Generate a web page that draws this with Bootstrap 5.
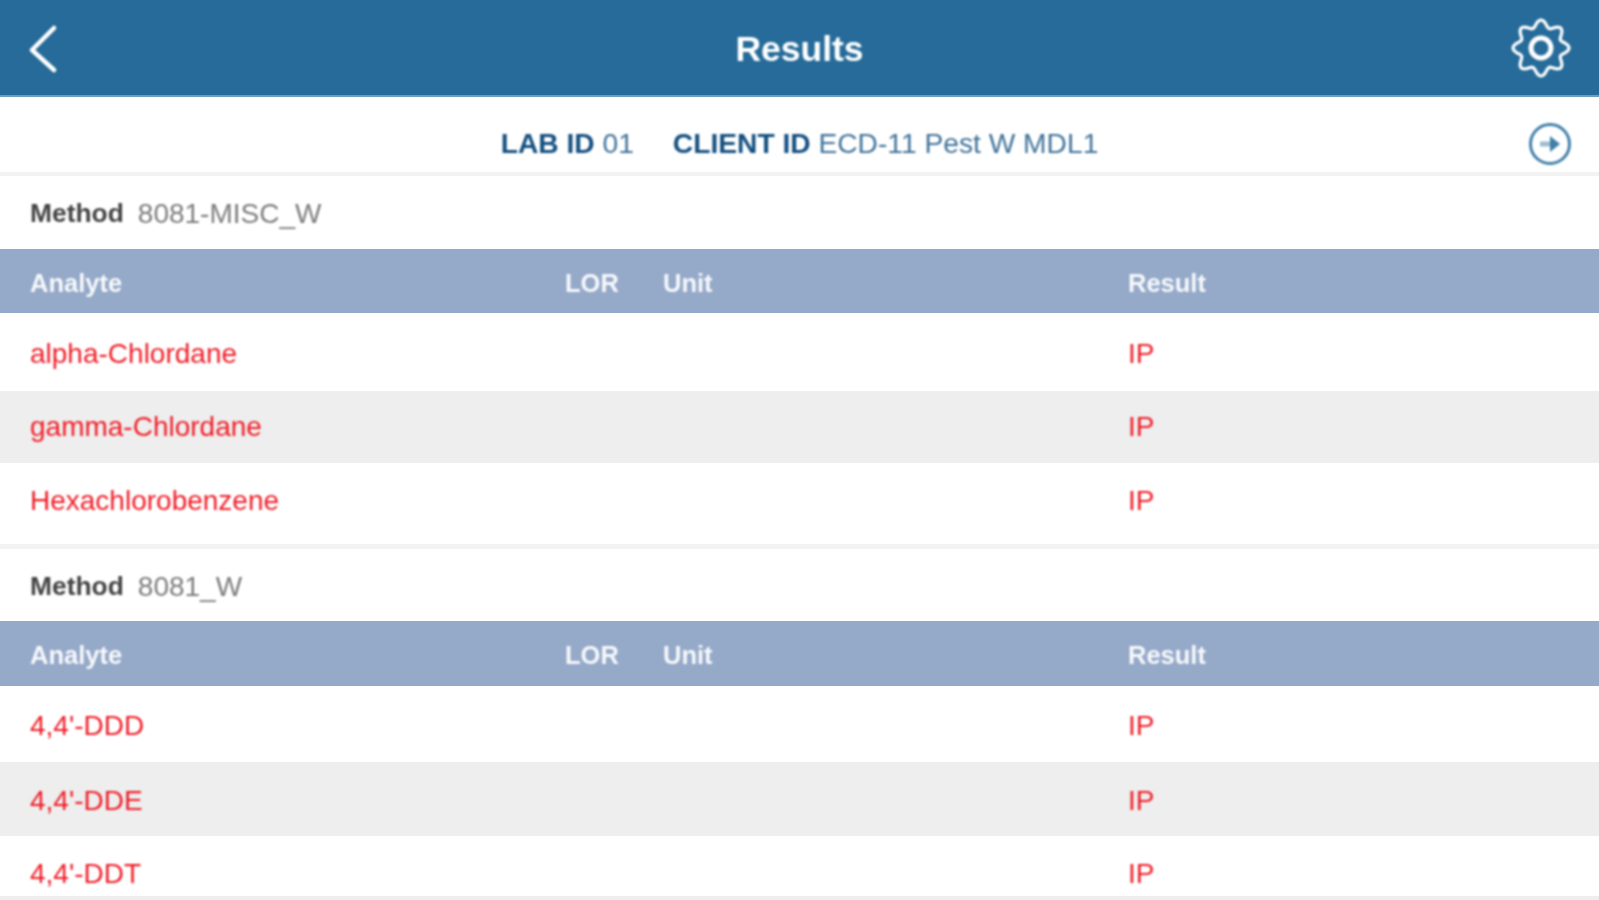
<!DOCTYPE html>
<html lang="en">
<head>
    <meta charset="UTF-8">
    <meta name="viewport" content="width=device-width, initial-scale=1.0">
    <title>Results</title>
    <link href="https://cdn.jsdelivr.net/npm/bootstrap@5.3.0/dist/css/bootstrap.min.css" rel="stylesheet">
    <style>
        html, body { height: 100%; overflow: hidden; }
        body { font-family: "Liberation Sans", Arial, sans-serif; font-size: 28px; background: #fff; }
        .soft { filter: blur(0.8px); }
        .app-bar { height: 97px; background: #266b99; padding: 0 28px; border-bottom: 2px solid #6f9dbb; }
        .app-side { width: 60px; }
        .app-title { font-size: 35.5px; font-weight: 700; padding-top: 5px; }
        .id-bar { height: 75px; padding: 18px 27px 0; }
        .id-text { color: #3f7299; gap: 39px; font-size: 28.2px; }
        .id-text b { color: #134f80; }
        .sep { height: 4px; background: #f3f3f3; }
        .sep-wide { height: 5px; }
        .method-row { height: 73px; padding-left: 30px; padding-top: 2px; color: #7c7c7c; }
        .method-row b { color: #444; font-size: 26.4px; margin-right: 14px; }
        .method-row.second { height: 72px; padding-top: 4px; }
        .result-table { width: 100%; table-layout: fixed; margin: 0; border-collapse: collapse; }
        .result-table th, .result-table td { padding: 0; vertical-align: middle; }
        .result-table th:first-child, .result-table td:first-child { padding-left: 30px; }
        .col-a { width: 565px; }
        .col-l { width: 98px; }
        .col-u { width: 465px; }
        .head-row { height: 64px; background: #95a9c9; color: #f7f9fb; }
        .head-row.second { height: 65px; }
        .head-row th { font-weight: 700; font-size: 25.5px; padding-top: 5px; }
        .head-row.second th { padding-top: 4px; }
        .data-row { color: #f01c26; background: #fff; }
        .data-row.alt { background: #eee; }
        .h-78 { height: 78px; }
        .h-76 { height: 76px; }
        .h-74 { height: 74px; }
        .h-72 { height: 72px; }
        .h-81 { height: 81px; }
        .h-60 { height: 60px; }
        .result-table .text-low td { padding-top: 4px; }
        .result-table .text-high td { padding-bottom: 6px; }
        .result-table .text-lowest td { padding-top: 16px; }
        .end-line { height: 4px; background: #eee; }
    </style>
</head>
<body>
    <header class="app-bar d-flex align-items-center justify-content-between text-white">
        <div class="app-side d-flex">
            <svg class="soft" width="32" height="50" viewBox="0 0 32 50" fill="none" stroke="#fff" stroke-width="4.5" stroke-linecap="round" stroke-linejoin="round"><path d="M26 5 L4 27 L26 47"/></svg>
        </div>
        <div class="app-title soft">Results</div>
        <div class="app-side d-flex justify-content-end">
            <svg class="soft" width="60" height="60" viewBox="0 0 60 60" fill="none" stroke="#fff" stroke-width="3.2">
                <path id="gear-outline"/>
                <circle cx="30" cy="30" r="10" stroke-width="5"/>
            </svg>
        </div>
    </header>
    <div class="id-bar d-flex align-items-center justify-content-between">
        <div style="width:44px"></div>
        <div class="id-text d-flex soft">
            <span><b>LAB ID</b> 01</span>
            <span><b>CLIENT ID</b> ECD-11 Pest W MDL1</span>
        </div>
        <svg class="soft" width="44" height="44" viewBox="0 0 44 44" fill="none" stroke="#3f7fa8" stroke-width="3">
            <circle cx="22" cy="22" r="19.5"/>
            <path d="M12 22 h12" stroke="#9dbdd2" stroke-width="5"/>
            <path d="M22 14 l10 8 l-10 8 z" fill="#3f7fa8" stroke="none"/>
        </svg>
    </div>
    <div class="sep"></div>
    <div class="method-row d-flex align-items-center soft"><b>Method</b> 8081-MISC_W</div>
    <table class="result-table">
        <colgroup><col class="col-a"><col class="col-l"><col class="col-u"><col></colgroup>
        <thead><tr class="head-row"><th><span class="soft d-inline-block">Analyte</span></th><th><span class="soft d-inline-block">LOR</span></th><th><span class="soft d-inline-block">Unit</span></th><th><span class="soft d-inline-block">Result</span></th></tr></thead>
        <tbody>
            <tr class="data-row h-78 text-low"><td><span class="soft d-inline-block">alpha-Chlordane</span></td><td></td><td></td><td><span class="soft d-inline-block">IP</span></td></tr>
            <tr class="data-row alt h-72"><td><span class="soft d-inline-block">gamma-Chlordane</span></td><td></td><td></td><td><span class="soft d-inline-block">IP</span></td></tr>
            <tr class="data-row h-81 text-high"><td><span class="soft d-inline-block">Hexachlorobenzene</span></td><td></td><td></td><td><span class="soft d-inline-block">IP</span></td></tr>
        </tbody>
    </table>
    <div class="sep sep-wide"></div>
    <div class="method-row second d-flex align-items-center soft"><b>Method</b> 8081_W</div>
    <table class="result-table">
        <colgroup><col class="col-a"><col class="col-l"><col class="col-u"><col></colgroup>
        <thead><tr class="head-row second"><th><span class="soft d-inline-block">Analyte</span></th><th><span class="soft d-inline-block">LOR</span></th><th><span class="soft d-inline-block">Unit</span></th><th><span class="soft d-inline-block">Result</span></th></tr></thead>
        <tbody>
            <tr class="data-row h-76 text-low"><td><span class="soft d-inline-block">4,4'-DDD</span></td><td></td><td></td><td><span class="soft d-inline-block">IP</span></td></tr>
            <tr class="data-row alt h-74 text-low"><td><span class="soft d-inline-block">4,4'-DDE</span></td><td></td><td></td><td><span class="soft d-inline-block">IP</span></td></tr>
            <tr class="data-row h-60 text-lowest"><td><span class="soft d-inline-block">4,4'-DDT</span></td><td></td><td></td><td><span class="soft d-inline-block">IP</span></td></tr>
        </tbody>
    </table>
    <div class="end-line"></div>
<script src="https://cdn.jsdelivr.net/npm/bootstrap@5.3.0/dist/js/bootstrap.bundle.min.js"></script>
<script>
    // wavy 8 tooth outline for the settings gear
    let pts = [];
    for (let i = 0; i < 160; i++) {
        let a = i / 160 * Math.PI * 2;
        let r = 24.5 + 3.5 * Math.cos(8 * a);
        pts.push((30 + r * Math.sin(a)).toFixed(2) + " " + (30 - r * Math.cos(a)).toFixed(2));
    }
    document.getElementById("gear-outline").setAttribute("d", "M" + pts.join(" L") + " Z");
</script>
</body>
</html>
